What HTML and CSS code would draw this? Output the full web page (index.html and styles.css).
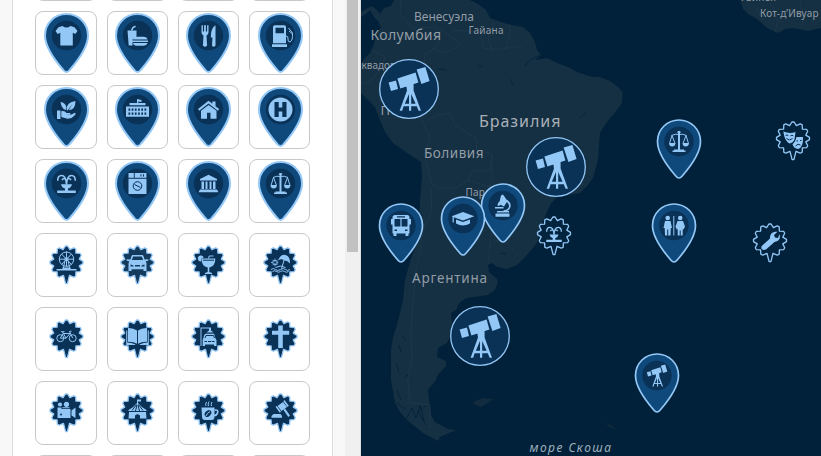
FILE: index.html
```html
<!DOCTYPE html>
<html lang="ru">
<head>
<meta charset="utf-8">
<title>Карта</title>
<link rel="stylesheet" href="styles.css">
</head>
<body>
<svg class="defs" aria-hidden="true">
  <defs>
    <symbol id="pin" viewBox="0 0 45 60"><path class="pin-body" d="M22.500 1C10.500 1 1 10.500 1 22.500C1 34 11.500 48 19.300 57Q22.500 61 25.700 57C33.500 48 44 34 44 22.500C44 10.500 34.500 1 22.500 1Z"/><circle class="pin-disc" cx="22.500" cy="22.500" r="14.700"/></symbol>
    <symbol id="star" viewBox="0 0 35 40"><path class="star-body" d="M16.400 1H18.600L20.900 4.700L24.700 2.800L26.700 3.900L26.900 8.100L31.100 8.300L32.200 10.300L30.300 14.100L34 16.400V18.600L30.300 20.900L32.200 24.700L31.100 26.700L26.900 26.900L26.700 31.100L24.700 32.200L20.500 30.300L18.400 38.700H16.600L14.500 30.300L10.300 32.200L8.300 31.100L8.100 26.900L3.900 26.700L2.800 24.700L4.700 20.900L1 18.600V16.400L4.700 14.100L2.800 10.300L3.900 8.300L8.100 8.100L8.300 3.900L10.300 2.800L14.100 4.700Z"/></symbol>

    <symbol id="shirt" viewBox="0 0 24 24"><path d="M8 2.500Q12 5.500 16 2.500L20 3.800L23 7.600L20.800 10.600L18.300 9.200V22H5.800V9.200L3.200 10.600L1 7.600L4 3.800Z"/></symbol>
    <symbol id="food" viewBox="0 0 24 24"><path d="M2 7H11V13L7 16V22H3.200Z"/><path class="l" d="M6 7L7.500 4L10 2.800"/><path d="M7.500 16Q8 13.200 11 13.200H18Q21.500 13.200 22 16Z"/><path d="M6.500 17H22.500V18.600H6.500ZM7.500 19.500H22Q21 22.300 18 22.300H11Q8 22.300 7.500 19.500Z"/></symbol>
    <symbol id="dine" viewBox="0 0 24 24"><path d="M5 1.800H6.400V8H7.600V1.800H9.400V8H10.600V1.800H12V9Q12 10.800 10 12L10.600 22Q8.500 24.500 6.400 22L7 12Q5 10.800 5 9ZM19 1.800V22Q17 24.500 15.500 22L16 14H14.300Q14.300 4.500 19 1.800Z"/></symbol>
    <symbol id="fuel" viewBox="0 0 24 24"><path fill-rule="evenodd" d="M4.500 19.800V3.500Q4.500 1.700 6.300 1.700H15.800Q17.500 1.700 17.500 3.500V19.800ZM7 4.300V9.700H15.500V4.300ZM3.500 20.700H18.500V23.500H3.500Z"/><path class="t" d="M17.500 12.500Q20 12.500 19.500 15.500T21.500 18.500Q24.500 17 24 9.500L20 4.500M20.500 7.500L23.500 10"/></symbol>
    <symbol id="eco" viewBox="0 0 24 24"><path d="M2.500 13H6V21.500H2.500ZM6.800 13.800Q10 12.800 12 15.500H15.500Q17 16.500 15 17.300H12Q16 18 20.500 15.200Q22 16 19.500 18.500Q17 21.500 13 21.300L6.800 19.500ZM12 12.200Q12 4.500 21 3.500Q21 12.500 14.200 12.800L18 6.500L13 13ZM6 4.500Q11 5 12 10L11 12.500Q7 11 6 4.500Z"/></symbol>
    <symbol id="mall" viewBox="0 0 24 24"><path d="M11.500 1.500L16 2.500V4.500L12.800 4V5.500H20V7.700H4V5.500H11.500ZM.5 9H23.500V19.300H.5Z"/><path class="dash" d="M3 12.200H21.500M3 16.200H21.500"/></symbol>
    <symbol id="house" viewBox="0 0 24 24"><path d="M1.500 11.500L12 3.300L15.800 6.200V4H19V8.800L22.700 11.500L21.400 13.200L12 6L2.800 13.200ZM4.500 13.300L12 7.500L20 13.300V21.200H14V15.200H10.500V21.200H4.500Z"/></symbol>
    <symbol id="hosp" viewBox="0 0 24 24"><circle cx="12" cy="12" r="12"/><path class="d" d="M6 4.500H10.200V10H13.800V4.500H18V19.500H13.800V14H10.200V19.500H6Z"/></symbol>
    <symbol id="fountain" viewBox="0 0 24 24"><path class="l" d="M3.200 9.200Q3.200 4 7 4Q11.500 4 12 13Q12.500 4 17 4Q20.800 4 20.800 9.200M7.500 8.500Q10 5 12 9.500Q14 5 16.500 8.500"/><path d="M6.500 12.700H17.500Q16.500 16.500 13.500 17V19H21.300V21.500H2.700V19H10.500V17Q7.500 16.500 6.500 12.700Z"/></symbol>
    <symbol id="washer" viewBox="0 0 24 24"><path d="M3 1.500H8.300V6.200H3ZM9.200 1.500H21V6.200H9.200ZM3 7.200H21V22.500H3Z"/><path class="dl" d="M15.500 2.800V5M18 2.800V5M9 13L15 16"/><circle class="dl" cx="12" cy="14.500" r="4.300"/></symbol>
    <symbol id="museum" viewBox="0 0 24 24"><path d="M12 3.300L20.500 7.500V9H3.500V7.500ZM5 10H7.500V17.500H5ZM9 10H11V17.500H9ZM13 10H15V17.500H13ZM16.500 10H19V17.500H16.500ZM3.500 18H20.500L22 20.800H2Z"/></symbol>
    <symbol id="scales" viewBox="0 0 24 24"><path d="M11 1.500H13V20H17V21H18.500V22.500H5.500V21H7V20H11ZM10.300 2H13.700V3.200H10.300ZM2 14H8.500Q8 17 5.200 17T2 14ZM15.500 14H22Q21.500 17 18.700 17T15.500 14Z"/><path class="t" d="M4.500 6Q8.500 4 12 5Q15.500 4 19.500 6M5 6L2.500 14H8L5 6M19 6L16 14H21.500L19 6"/></symbol>
    <symbol id="ferris" viewBox="0 0 24 24"><g class="t"><circle cx="12" cy="8.700" r="7.200"/><circle cx="12" cy="8.700" r="1.600"/><path d="M12 1V16M4.500 8.700H19.500M7 3.500L17 14M17 3.500L7 14M10.500 10L8.500 19M13.500 10L15.500 19"/></g><path d="M2 18.500H22V20H2ZM8 17H16V19H8Z"/></symbol>
    <symbol id="car" viewBox="0 0 24 24"><path fill-rule="evenodd" d="M7 4.500H17Q18 4.500 19 9L22.800 8.800V10.200L20.300 10.700L21 13V20.500H18V18.700H6V20.500H3V13L3.700 10.700L1.200 10.200V8.800L5 9Q6 4.500 7 4.500ZM7.700 5.900L6.300 9.500H17.700L16.300 5.900ZM5 14V16H8.300L7.600 14.700ZM19 14L16.400 14.700L15.700 16H19ZM9.500 14.500V16H14.500V14.500Z"/></symbol>
    <symbol id="drink" viewBox="0 0 24 24"><path d="M5 8H18.800Q18.800 16 12.800 17V21.500L15.500 22.500V23.500H8.500V22.500L11.200 21.500V17Q5 16 5 8Z"/><path class="d" d="M6.500 9.200H17.500V10.200H6.500Z"/><path class="t" d="M12 8L12.700 5.500H17"/><path d="M4.500 11A3 3 0 1 1 7.200 7L5 8Z"/></symbol>
    <symbol id="beach" viewBox="0 0 24 24"><path d="M9.500 10Q12 3.500 17 4.500Q22 6 21.500 13Q18.500 9.500 15.500 10Q13 7.500 9.500 10Z"/><path class="t" d="M15.800 9L13 18"/><circle class="t" cx="6.500" cy="12" r="2.300"/><path class="tick" d="M6.500 8V16M2.500 12H5M8 12H10.500M3.700 9.200L5 10.500M8 13.500L9.500 15M9.300 9.200L8 10.500M5 13.500L3.500 15"/><path class="t" d="M2.500 19Q5 17 7 19T12 19T17 19T21.500 19M4 21Q6 19.500 8 21T12 21T16 21T20 21M7 17Q12 14 17 17"/></symbol>
    <symbol id="bike" viewBox="0 0 24 24"><g class="t"><circle cx="5.800" cy="13.700" r="3.500"/><circle cx="18.200" cy="13.700" r="3.500"/><path d="M5.800 13.700L8.500 9H15.500L11.500 13.700H5.800M8 7.300L11.500 13.700M6.500 7.200H10M18.200 13.700L15 6.800H17"/></g></symbol>
    <symbol id="book" viewBox="0 0 24 24"><path d="M2.500 3.500Q8 3.300 11.500 6V19.200Q8 17 2.500 17.200ZM21.500 3.500Q16 3.300 12.500 6V19.200Q16 17 21.500 17.200ZM.7 6H1.800V18Q6 18 9.500 19.700L10 20.500H.7ZM23.300 6H22.200V18Q18 18 14.500 19.700L14 20.500H23.300Z"/></symbol>
    <symbol id="wash" viewBox="0 0 24 24"><path d="M4 3H14.500V6L17 8H10L12.500 6V4H5V21.500H4ZM8 10L9 9.300H17.500L19 14L20 15.500V21.500H17.500V20H8.500V21.500H6.200V15.500L8 10Z"/><path class="dl" d="M8.500 13.500L9.500 11H17L18 13.500M8 17H10.500M15.500 17H18"/><path class="d" d="M11.500 16.500H14.800V17.500H11.500Z"/></symbol>
    <symbol id="cross" viewBox="0 0 24 24"><path d="M9.700 1H14.300V6.300H20.700V10.300H14.300V23.500H9.700V10.300H3.500V6.300H9.700Z"/></symbol>
    <symbol id="camera" viewBox="0 0 24 24"><circle cx="5.500" cy="6" r="2.100"/><circle cx="12" cy="5.800" r="2.600"/><path d="M3 9H7V10.500H16V19.500H3ZM8 8.800H15V9.800H8ZM17 12L21 9V19.500L17 17Z"/><circle class="d" cx="6.500" cy="16" r="1"/></symbol>
    <symbol id="tent" viewBox="0 0 24 24"><path d="M12 1H15.500V3H12.500V4.500Q16 9 21 11.500V12.500H3V11.500Q8 9 11.500 4.500V1ZM3.500 13.500H20.500L21 20H14.500V17L12 15.500L9.500 17V20H3Z"/><path class="dl" d="M11 6L6.500 12M11.500 6.500L10 12.500M13 6L17.500 12M12.500 6.500L14 12.500"/></symbol>
    <symbol id="coffee" viewBox="0 0 24 24"><path d="M5 9H18V18Q18 21.500 15 21.500H8.500Q5.500 21.500 5.500 18Z"/><path class="l" d="M18 11.500Q22 11 21.200 14Q20.500 17 17.500 17"/><path class="t" d="M9.500 7.500Q8.500 6 10 3.500M12 7.500Q11 6 12.500 3M15 7.500Q14 6 15.500 3.500"/><ellipse class="d" cx="11.500" cy="15" rx="3.800" ry="2.800" transform="rotate(-45 11.500 15)"/><path class="t" d="M9.500 17.500Q10.500 14.500 13.500 13"/></symbol>
    <symbol id="gavel" viewBox="0 0 24 24"><path d="M9 7.500L14.500 3.500L18.500 8.500L13 12.500ZM7 8.200L8.300 7.500L12.500 13L11.300 14.200ZM14.800 2.800L16 1.500L20.300 7.300L19 8.500ZM15 11.500L16.500 10L21.500 17L19.800 18.500ZM5 15.500H12L13.500 17.500V19.300H3V17.500Z"/></symbol>
    <symbol id="bus" viewBox="0 0 24 24"><path fill-rule="evenodd" d="M6 1.500H18Q20.500 1.500 20.500 4V5.500H22V11H20.500V20H19.500V22.500H16.500V20H7.500V22.500H4.500V20H3.500V11H2V5.500H3.500V4Q3.500 1.500 6 1.500ZM8 2.700V4H16V2.700ZM5.500 5.500V13H11.400V5.500ZM12.600 5.500V13H18.500V5.500ZM5.500 16V17.500H8V16ZM16 16V17.500H18.500V16Z"/></symbol>
    <symbol id="grad" viewBox="0 0 24 24"><path d="M12 5.500L23.300 9.800L12 14L2.800 10.800V16H1.600V10.300L.7 9.800ZM5 13L12 15.500L19 13V17Q15.500 19 12 19T5 17Z"/></symbol>
    <symbol id="micro" viewBox="0 0 24 24"><path d="M10 2L12 1L16.500 7.500L13 13L8 10.500ZM7 9.500L9.500 7L12 8.500L8 12.500L6.500 12ZM4 13.500H12.500V15H4ZM6 17.500H18V19H6ZM4.500 20H18.500V23.300H4.500Z"/><path class="l" d="M15.500 7Q20 10 18.500 14Q17 17.500 12.500 17.500"/></symbol>
    <symbol id="wc" viewBox="0 0 24 24"><circle cx="5.700" cy="4.500" r="2.300"/><circle cx="18.200" cy="4.500" r="2.300"/><path d="M3 7.500H8.500L10 14.500H8.800L8.500 22H6.200V16H5.200V22H3L2.700 14.500H1.500ZM11.300 2.500H12.300V22H11.300ZM15.500 7.500H21L23 13L21.500 16L20.700 15.500V22H18.700V17H17.700V22H15.700V15.500L14.800 16L13.500 13Z"/></symbol>
    <symbol id="scope" viewBox="0 0 24 24"><path d="M1.800 8.700L5.500 7.700L6.500 12L3 13ZM6.200 6.700L15.300 3.700L16.700 8.700L7.700 11.800ZM15.800 2.300L20.200 1L22.300 8L18.200 9.500ZM10.700 10.800L14.300 9.500V12.800L18 22.900H16.800L15.900 20.600H13.100V22.900H12V20.600H9.300L8.600 22.900H7.300L11 12.800ZM12 14.500L9.900 19.400H12ZM13.100 14.500V19.400H15.300Z"/></symbol>
    <symbol id="masks" viewBox="0 0 24 24"><path d="M2.300 5Q8.500 7.500 14.500 5.500L13.500 13Q12 16.500 8.500 17Q3.500 14.500 2.300 5ZM15.500 10.500H22Q22.500 21 17 22.500Q13 22 11.500 18Q14.500 15.500 15.500 10.500Z"/><path class="dl" d="M4.500 9Q6 8 7.300 9M9.500 9.300Q11 8.300 12.300 9.300M5.500 12Q8.500 15 11.500 12M15.500 14.500H17M19 14H20.500M14.500 19.500Q17 16.500 19.500 18.500"/></symbol>
    <symbol id="wrench" viewBox="0 0 24 24"><path d="M3.800 17.500L12 10Q11.500 4.500 17 3.200L19.500 3.300L16 6.500L17 9L20 9.500L21.500 5.500Q23.500 12 16.500 13.500L8 21Q5.500 22 4 20.800Q2.700 19.300 3.800 17.500Z"/></symbol>
  </defs>
</svg>

<main class="app">
  <section class="side">
    <div class="sheet">
      <div class="grid">
        <div class="card"></div><div class="card"></div><div class="card"></div><div class="card"></div>
        <div class="card"><svg class="pin"><use href="#pin"/><use class="ico" href="#shirt" x="10.500" y="10.500" width="24" height="24"/></svg></div>
        <div class="card"><svg class="pin"><use href="#pin"/><use class="ico" href="#food" x="10.500" y="10.500" width="24" height="24"/></svg></div>
        <div class="card"><svg class="pin"><use href="#pin"/><use class="ico" href="#dine" x="10.500" y="10.500" width="24" height="24"/></svg></div>
        <div class="card"><svg class="pin"><use href="#pin"/><use class="ico" href="#fuel" x="10.500" y="10.500" width="24" height="24"/></svg></div>
        <div class="card"><svg class="pin"><use href="#pin"/><use class="ico" href="#eco" x="10.500" y="10.500" width="24" height="24"/></svg></div>
        <div class="card"><svg class="pin"><use href="#pin"/><use class="ico" href="#mall" x="10.500" y="10.500" width="24" height="24"/></svg></div>
        <div class="card"><svg class="pin"><use href="#pin"/><use class="ico" href="#house" x="10.500" y="10.500" width="24" height="24"/></svg></div>
        <div class="card"><svg class="pin"><use href="#pin"/><use class="ico" href="#hosp" x="10.500" y="10.500" width="24" height="24"/></svg></div>
        <div class="card"><svg class="pin"><use href="#pin"/><use class="ico" href="#fountain" x="10.500" y="10.500" width="24" height="24"/></svg></div>
        <div class="card"><svg class="pin"><use href="#pin"/><use class="ico" href="#washer" x="10.500" y="10.500" width="24" height="24"/></svg></div>
        <div class="card"><svg class="pin"><use href="#pin"/><use class="ico" href="#museum" x="10.500" y="10.500" width="24" height="24"/></svg></div>
        <div class="card"><svg class="pin"><use href="#pin"/><use class="ico" href="#scales" x="10.500" y="10.500" width="24" height="24"/></svg></div>
        <div class="card"><svg class="star"><use href="#star"/><use class="ico" href="#ferris" x="5.500" y="5.500" width="24" height="24"/></svg></div>
        <div class="card"><svg class="star pale"><use href="#star"/><use class="ico" href="#car" x="5.500" y="5.500" width="24" height="24"/></svg></div>
        <div class="card"><svg class="star"><use href="#star"/><use class="ico" href="#drink" x="5.500" y="5.500" width="24" height="24"/></svg></div>
        <div class="card"><svg class="star"><use href="#star"/><use class="ico" href="#beach" x="5.500" y="5.500" width="24" height="24"/></svg></div>
        <div class="card"><svg class="star"><use href="#star"/><use class="ico" href="#bike" x="5.500" y="5.500" width="24" height="24"/></svg></div>
        <div class="card"><svg class="star"><use href="#star"/><use class="ico" href="#book" x="5.500" y="5.500" width="24" height="24"/></svg></div>
        <div class="card"><svg class="star"><use href="#star"/><use class="ico" href="#wash" x="5.500" y="5.500" width="24" height="24"/></svg></div>
        <div class="card"><svg class="star"><use href="#star"/><use class="ico" href="#cross" x="5.500" y="5.500" width="24" height="24"/></svg></div>
        <div class="card"><svg class="star"><use href="#star"/><use class="ico" href="#camera" x="5.500" y="5.500" width="24" height="24"/></svg></div>
        <div class="card"><svg class="star"><use href="#star"/><use class="ico" href="#tent" x="5.500" y="5.500" width="24" height="24"/></svg></div>
        <div class="card"><svg class="star"><use href="#star"/><use class="ico" href="#coffee" x="5.500" y="5.500" width="24" height="24"/></svg></div>
        <div class="card"><svg class="star"><use href="#star"/><use class="ico" href="#gavel" x="5.500" y="5.500" width="24" height="24"/></svg></div>
        <div class="card"></div><div class="card"></div><div class="card"></div><div class="card"></div>
      </div>
    </div>
    <div class="track"><div class="thumb"></div></div>
  </section>
  <section class="map">
    <svg class="canvas" viewBox="361 0 460 456">
      <path class="land" d="M394 0L391 6L384 8L380 14L378 21L381 27L376 34L374 44L370 53L364 59L361 64V93L368 100L375 107L380 120L385 132L393 143L410 155L421 162L422 176L420 200L419 225L415 247L410 262L405 280L403 300L400 313L396 328L393 337L391 350L391 380L395 403L400 412L407 420L423 433L438 441L440 437L456 430L448 429L435 422L431 415L430 408L428 390L436 380L437 376L446 366L446 361L437 357L438 348L447 343L451 335L452 322L451 313L456 310L460 302L467 298L488 295L495 290L498 282L497 279L489 272L488 265L492 263L497 267L507 269L517 265L527 255L537 243L542 224L550 205L557 197L580 193L588 185L593 178L598 160L600 133L606 123L613 115L622 103L622.700 92L618 87L610 81L600 77L592 77L577 72L568 67L557 63L547 58L535 60L541 55L537 50L535 42L530 33L523 27L507 24L490 18L486 10L478 4L470 0Z"/>
      <path class="land" d="M740 0L743 9L748 14L757 19L767 28L778 33L785 29L794 28L803 30L808 31L821 28V0ZM361 12L366 9L372 6L377 10L382 16L379 22L374 17L370 10L366 14L361 17Z"/>
      <path class="isle" d="M473 402L483 398L493 399L488 403L481 407L475 405ZM605 423L611 425L617 430L610 427Z"/>
      <path class="border" d="M401 0L400 14L412 28L436 27L439 42L432 51L424 54L425 64M372 50L385 57L380 70L368 84L361 82M437 27L455 39L460 45L445 53L432 48M453 30L480 32L484 48L494 50L523 46M494 22L488 38L492 50M509 24L510 34L506 48M424 62L400 92M427 120L440 115L450 113L455 125L476 138L477 150L492 154L490 171L472 171L468 180M421 118L430 138L424 155L432 184L438 188L456 188L468 180L490 187M431 188L432 210L423 230L420 250L416 270L413 300L411 330L412 360L408 380L410 403L430 405V428M492 154L492 180L482 205L492 230L488 262M493 240L505 241L518 255M756 8L763 20M770 2L778 20L775 32M800 0L803 25"/>
      <path class="fjord" d="M399 345L401 352M396 363L399 372M397 390L401 400M406 419L412 408L416 418L420 405L424 421M427 405L418 412L426 425M403 336L406 340M405 377L408 375M397 403L405 409M483 67L477 65M447 70L438 69M510 79L513 85M580 118L586 113M500 253L506 254M540 55L530 60L525 66"/>
      <g class="label">
        <text x="414" y="20.700" font-size="12" textLength="60">Венесуэла</text>
        <text x="370.500" y="39.700" font-size="14" textLength="70.500">Колумбия</text>
        <text x="468.500" y="34" font-size="10" textLength="35">Гайана</text>
        <text x="361.500" y="68.800" font-size="10" textLength="34.500">квадор</text>
        <text x="380.500" y="114.700" font-size="13" textLength="34">Перу</text>
        <text class="big" x="479" y="126.600" font-size="16" textLength="81.500">Бразилия</text>
        <text x="424" y="158.300" font-size="13.500" textLength="59.500">Боливия</text>
        <text x="465.500" y="196" font-size="10" textLength="48">Парагвай</text>
        <text x="412" y="282.700" font-size="13.500" textLength="75">Аргентина</text>
        <text x="760" y="17.300" font-size="10" textLength="58.500">Кот-д’Ивуар</text>
        <text x="741" y="1" font-size="10" textLength="35">Гвинея</text>
        <text class="sea" x="529.500" y="452" font-size="12" textLength="81.500">море Скоша</text>
      </g>
      <g class="spot"><circle cx="409" cy="89" r="29.300"/><use class="ico" href="#scope" x="385" y="65" width="48" height="48"/></g>
      <g class="spot"><circle cx="556" cy="167" r="29.300"/><use class="ico" href="#scope" x="532" y="143" width="48" height="48"/></g>
      <g class="spot"><circle cx="480" cy="336" r="29.300"/><use class="ico" href="#scope" x="456" y="312" width="48" height="48"/></g>
      <g transform="translate(656.500 119)"><use href="#pin" width="45" height="60"/><use class="ico" href="#scales" x="10.500" y="10.500" width="24" height="24"/></g>
      <g transform="translate(480.500 183)"><use href="#pin" width="45" height="60"/><use class="ico" href="#micro" x="10.500" y="10.500" width="24" height="24"/></g>
      <g transform="translate(440.500 196)"><use href="#pin" width="45" height="60"/><use class="ico" href="#grad" x="10.500" y="10.500" width="24" height="24"/></g>
      <g transform="translate(378.500 203)"><use href="#pin" width="45" height="60"/><use class="ico" href="#bus" x="10.500" y="10.500" width="24" height="24"/></g>
      <g transform="translate(651.500 203)"><use href="#pin" width="45" height="60"/><use class="ico" href="#wc" x="10.500" y="10.500" width="24" height="24"/></g>
      <g transform="translate(634.500 353)"><use href="#pin" width="45" height="60"/><use class="ico" href="#scope" x="10.500" y="10.500" width="24" height="24"/></g>
      <g class="hollow" transform="translate(536.500 216)"><use href="#star" width="35" height="40"/><use class="ico" href="#fountain" x="7.500" y="8" width="20" height="20"/></g>
      <g class="hollow" transform="translate(775.500 121)"><use href="#star" width="35" height="40"/><use class="ico" href="#masks" x="5.500" y="5.500" width="24" height="24"/></g>
      <g class="hollow" transform="translate(752.500 223)"><use href="#star" width="35" height="40"/><use class="ico" href="#wrench" x="5.500" y="5.500" width="24" height="24"/></g>
    </svg>
  </section>
</main>
</body>
</html>
```
FILE: styles.css
```css
:root {
  --sky: #93c7f6;
  --navy: #0a3156;
  --blue: #0f487a;
}

* { box-sizing: border-box; }

body {
  margin: 0;
  height: 456px;
  overflow: hidden;
  font-family: "Noto Sans", "Open Sans", sans-serif;
}

.defs { position: absolute; width: 0; height: 0; }

.app { display: flex; height: 456px; }

.side {
  display: flex;
  justify-content: space-between;
  width: 361px;
  padding-left: 12px;
  background: #f8f8f8;
  border-right: 1px solid #dedede;
  overflow: hidden;
}

.sheet {
  width: 321px;
  padding: 0 22px;
  background: #fff;
  border: solid #dcdcdc;
  border-width: 0 1px;
}

.grid {
  display: grid;
  grid-template-columns: repeat(4, 61.300px);
  grid-auto-rows: 64px;
  gap: 10px;
  margin: -63px 0 0 .3px;
}

.card {
  display: flex;
  justify-content: center;
  align-items: flex-start;
  border: 1px solid #c9c9c9;
  border-radius: 8px;
}

.card svg { margin-left: .8px; overflow: visible; }
.card .pin { width: 45px; height: 60px; margin-top: 1px; }
.card .star { width: 35px; height: 40px; margin-top: 11px; }

.pin-body { fill: var(--blue); stroke: var(--sky); stroke-width: 1.700; }
.card .pin-body, .card .pin { --edge: 2; }
.pin-disc { fill: var(--navy); }
.star-body { fill: var(--star, var(--navy)); stroke: var(--sky); stroke-width: 1.300; stroke-linejoin: round; }
.pale { --star: #153b5c; }
.hollow { --star: #03243f; }

symbol { overflow: visible; }
.ico { fill: var(--sky); }
.l, .t, .dl, .dash, .tick { fill: none; stroke: var(--sky); stroke-width: 1.600; }
.t { stroke-width: 1; }
.tick { stroke-width: .8; stroke-dasharray: 1.200 1; }
.d { fill: var(--navy); }
.dl { stroke: var(--navy); stroke-width: 1; }
.dash { stroke: var(--navy); stroke-width: 2.300; stroke-dasharray: 1.700 1.500; }
.pin-body { stroke-width: var(--edge, 1.700); }

.track {
  width: 15px;
  padding: 0 2px;
  background: #f0f0f0;
}
.thumb { height: 252px; background: #c1c1c1; }

.map { flex: 1; background: #002139; }
.canvas { display: block; width: 460px; height: 456px; }

.land { fill: #152f43; }
.isle { fill: #122b3e; }
.border { fill: none; stroke: #21394b; stroke-width: .8; }
.fjord { fill: none; stroke: #04243b; stroke-width: 1; }

.label { fill: #929da5; }
.label .big { fill: #a8b0b6; }
.label .sea { fill: #9fb0bc; font-style: italic; }

.spot circle { fill: var(--navy); stroke: var(--sky); stroke-width: 1.300; }
```
